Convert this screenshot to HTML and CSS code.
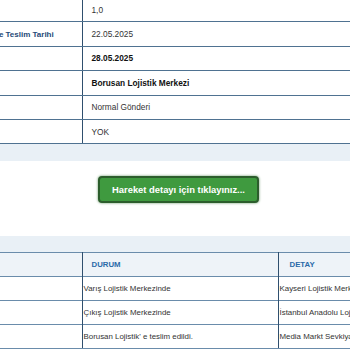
FILE: index.html
```html
<!DOCTYPE html>
<html lang="tr">
<head>
    <meta charset="UTF-8">
    <title>Gönderi Takip</title>
    <link rel="stylesheet" href="styles.css">
</head>
<body>
    <div class="page">
        <table class="info-table">
            <colgroup>
                <col class="col-label">
                <col>
            </colgroup>
            <tr>
                <td class="label"></td>
                <td class="value">1,0</td>
            </tr>
            <tr>
                <td class="label">Müşteriye Teslim Tarihi</td>
                <td class="value">22.05.2025</td>
            </tr>
            <tr>
                <td class="label"></td>
                <td class="value strong">28.05.2025</td>
            </tr>
            <tr>
                <td class="label"></td>
                <td class="value strong">Borusan Lojistik Merkezi</td>
            </tr>
            <tr>
                <td class="label"></td>
                <td class="value">Normal Gönderi</td>
            </tr>
            <tr>
                <td class="label"></td>
                <td class="value">YOK</td>
            </tr>
        </table>

        <div class="band"></div>

        <div class="action">
            <button class="detail-btn">Hareket detayı için tıklayınız...</button>
        </div>

        <div class="band band-low"></div>

        <table class="move-table">
            <colgroup>
                <col class="col-label">
                <col class="col-status">
                <col>
            </colgroup>
            <tr class="head">
                <th></th>
                <th>DURUM</th>
                <th class="detail">DETAY</th>
            </tr>
            <tr>
                <td></td>
                <td>Varış Lojistik Merkezinde</td>
                <td>Kayseri Lojistik Merkezi</td>
            </tr>
            <tr>
                <td></td>
                <td>Çıkış Lojistik Merkezinde</td>
                <td>İstanbul Anadolu Lojistik Merkezi</td>
            </tr>
            <tr>
                <td></td>
                <td>Borusan Lojistik' e teslim edildi.</td>
                <td>Media Markt Sevkiyat Deposu</td>
            </tr>
        </table>
    </div>
</body>
</html>
```

FILE: styles.css
```css
body {
    margin: 0;
    overflow: hidden;
    background: #fff;
    font-family: "Liberation Sans", Arial, sans-serif;
    color: #333;
}

.page {
    width: 449px;
    margin-left: -46px;
    margin-top: -2px;
}

table {
    border-collapse: collapse;
    table-layout: fixed;
    width: 449px;
}

.col-label {
    width: 128px;
}

.col-status {
    width: 196px;
}

/* ust bilgi tablosu */
.info-table td {
    height: 23.4px;
    padding: 0 0 0 9px;
    border-bottom: 1px solid #4f7291;
    font-size: 8.3px;
    vertical-align: middle;
    white-space: nowrap;
}

.info-table .label {
    padding-left: 12px;
    border-right: 1px solid #2f4f6e;
    color: #1f4a78;
    font-size: 8px;
    font-weight: bold;
}

.info-table .value.strong {
    color: #111;
    font-weight: bold;
}

.band {
    height: 17px;
    background: #e9f0f6;
}

.band-low {
    height: 16px;
}

.action {
    height: 75px;
    box-sizing: border-box;
    padding-top: 15px;
    display: flex;
    justify-content: center;
    align-items: flex-start;
}

.detail-btn {
    width: 161px;
    height: 27px;
    padding: 0;
    background: #3f9a3f;
    border: 2px solid #2c5d2c;
    border-radius: 4px;
    box-shadow: 0 0 2px 1px #b9cfb9;
    color: #fff;
    font-family: "Liberation Sans", Arial, sans-serif;
    font-size: 9.4px;
    font-weight: bold;
    cursor: pointer;
}

/* hareket tablosu */
.move-table th,
.move-table td {
    height: 23px;
    border-top: 1px solid #6a8cab;
    font-size: 7.9px;
    text-align: left;
    vertical-align: middle;
    padding: 0 0 0 1px;
    white-space: nowrap;
    overflow: hidden;
}

.move-table th:first-child,
.move-table td:first-child,
.move-table th:nth-child(2),
.move-table td:nth-child(2) {
    border-right: 1px solid #2f4f6e;
}

.move-table tr.head th {
    background: #eef3f8;
    color: #2b6aa8;
    font-size: 7.8px;
    font-weight: bold;
    padding-left: 9px;
    padding-top: 0;
}

.move-table tr.head th.detail {
    padding-left: 11px;
}

.move-table tr:last-child td {
    border-bottom: 1px solid #6a8cab;
}
```
